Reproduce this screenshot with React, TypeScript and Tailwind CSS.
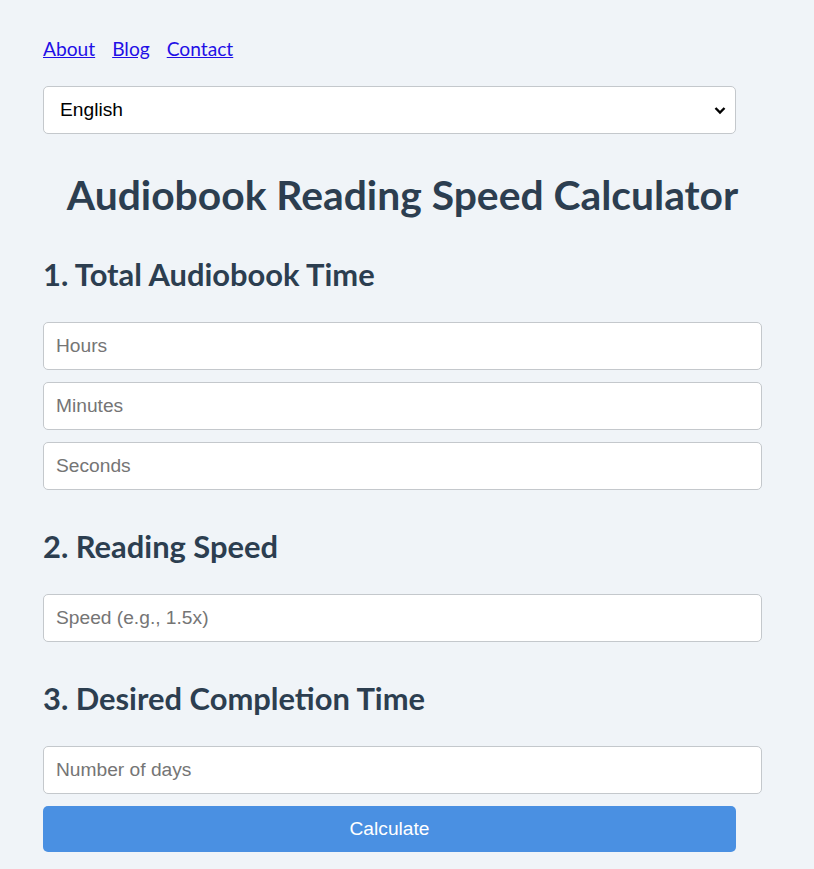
import React from "react";

const heading = { fontFamily: "Lato, 'Open Sans', sans-serif" };
const arial = { fontFamily: "'Liberation Sans', Arial, sans-serif" };

function Field({ placeholder }: { placeholder: string }) {
  return (
    <input
      type="text"
      placeholder={placeholder}
      style={arial}
      className="block h-[48px] w-[719px] rounded-[5px] border border-[#c4c8cc] bg-white px-[12px] text-[19.2px] text-black placeholder:text-[#757575] outline-none"
    />
  );
}

function H2({ children, mt }: { children: React.ReactNode; mt: string }) {
  return (
    <h2
      style={heading}
      className={`${mt} h-[35px] whitespace-nowrap text-[30.9px] font-bold leading-[35px] text-[#2c3e50]`}
    >
      {children}
    </h2>
  );
}

export default function App() {
  return (
    <div className="min-h-[869px] w-full bg-[#f0f4f8]">
      <div className="pl-[43px] pt-[36px]">
        <nav className="flex h-[26px] items-center gap-[17px] text-[19.2px] leading-[26px]" style={heading}>
          <a href="#" className="text-[#1f0fe6] underline">About</a>
          <a href="#" className="text-[#1f0fe6] underline">Blog</a>
          <a href="#" className="text-[#1f0fe6] underline">Contact</a>
        </nav>
        <div className="relative mt-[24px] h-[48px] w-[693px]">
          <select
            style={arial}
            className="h-[48px] w-[693px] appearance-none rounded-[5px] border border-[#c4c8cc] bg-white pl-[16px] text-[19.2px] text-black outline-none"
          >
            <option>English</option>
          </select>
          <svg
            className="pointer-events-none absolute right-[10px] top-[20px]"
            width="12"
            height="9"
            viewBox="0 0 12 9"
          >
            <path d="M1.5 2 L6 6.5 L10.5 2" fill="none" stroke="#000" strokeWidth="2.4" />
          </svg>
        </div>
        <h1
          style={heading}
          className="mt-[38px] flex h-[46px] w-[719px] items-center justify-center whitespace-nowrap text-[40.8px] font-bold leading-[46px] text-[#2c3e50]"
        >
          Audiobook Reading Speed Calculator
        </h1>
        <H2 mt="mt-[39px]">1. Total Audiobook Time</H2>
        <div className="mt-[30px] flex flex-col gap-[12px]">
          <Field placeholder="Hours" />
          <Field placeholder="Minutes" />
          <Field placeholder="Seconds" />
        </div>
        <H2 mt="mt-[39px]">2. Reading Speed</H2>
        <div className="mt-[30px]">
          <Field placeholder="Speed (e.g., 1.5x)" />
        </div>
        <H2 mt="mt-[39px]">3. Desired Completion Time</H2>
        <div className="mt-[30px]">
          <Field placeholder="Number of days" />
        </div>
        <button
          style={arial}
          className="mt-[12px] h-[46px] w-[693px] rounded-[5px] bg-[#4a90e2] text-[19.2px] text-white"
        >
          Calculate
        </button>
      </div>
    </div>
  );
}
